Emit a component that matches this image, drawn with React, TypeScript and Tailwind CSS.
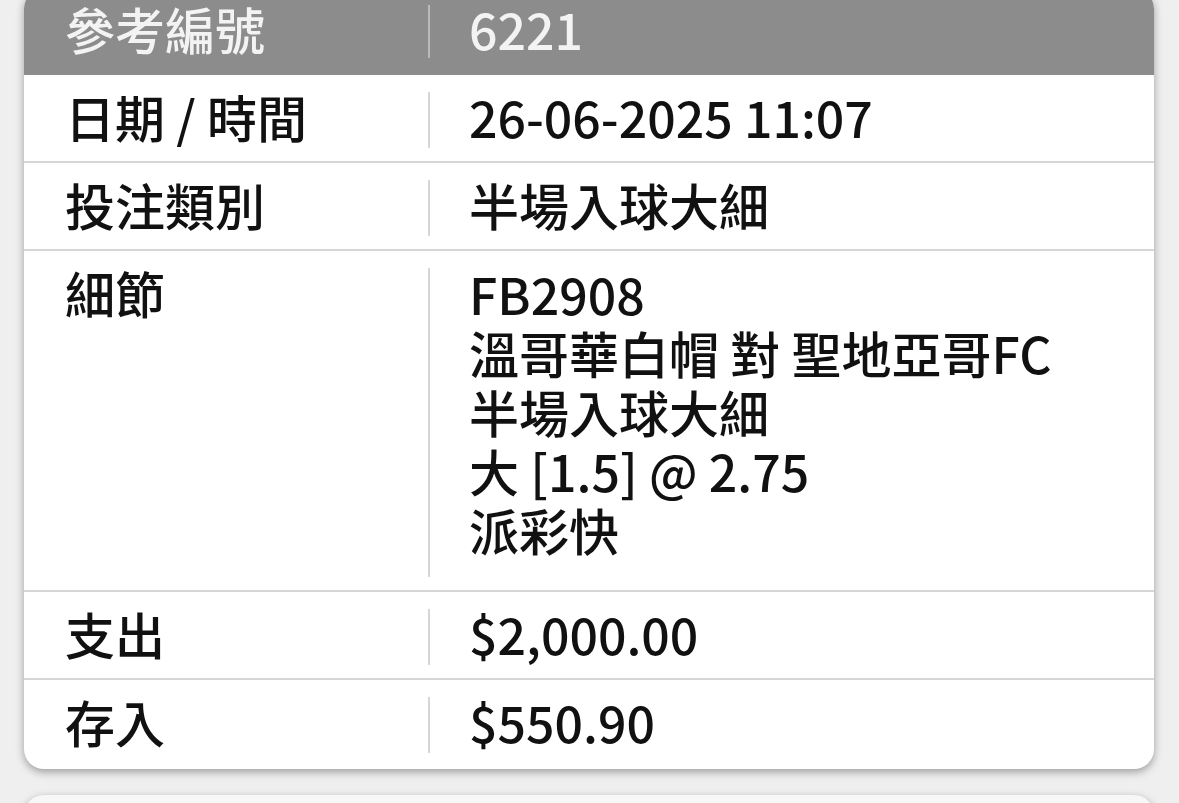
const rows = [
	{ label: "日期 / 時間", value: ["26-06-2025 11:07"] },
	{ label: "投注類別", value: ["半場入球大細"] },
	{
		label: "細節",
		value: ["FB2908", "溫哥華白帽 對 聖地亞哥FC", "半場入球大細", "大 [1.5] @ 2.75", "派彩快"],
	},
	{ label: "支出", value: ["$2,000.00"] },
	{ label: "存入", value: ["$550.90"] },
];

export default function App() {
	return (
		<div
			className="min-h-[803px] w-full overflow-hidden bg-[#efefef] text-[50px] text-[#111]"
			style={{ fontFamily: '"Noto Sans CJK TC", "Noto Sans", sans-serif' }}
		>
			<div className="mx-[24px] -mt-[11px] w-[1130px] rounded-[20px] bg-white shadow-[0_3px_8px_rgba(0,0,0,0.35)]">
				<div className="flex items-start rounded-t-[20px] bg-[#8c8c8c] pt-[16px] pb-[17px] text-[#f3f3f3]">
					<div className="-mt-[3px] w-[404px] pl-[41px] font-medium leading-[53px]">參考編號</div>
					<div className="border-l-2 border-[#b9b9b9] pl-[39px] font-medium">
						<div className="-mt-[3px] mb-[3px] leading-[53px]">6221</div>
					</div>
				</div>
				{rows.map((row, i) => {
					const multi = row.value.length > 1;
					const last = i === rows.length - 1;
					return (
						<div
							key={row.label}
							className={`flex items-start pt-[17px] ${last ? "pb-[16px]" : "pb-[13px]"} ${
								i > 0 ? "border-t-2 border-[#d6d6d6]" : ""
							}`}
						>
							<div className="-mt-[4px] w-[404px] pl-[41px] font-medium leading-[56px]">{row.label}</div>
							<div
								className={`border-l-2 border-[#d6d6d6] pl-[39px] font-medium ${
									multi ? "pb-[14px] leading-[59px]" : "leading-[56px]"
								}`}
							>
								<div className="-mt-[4px] mb-[4px]">
									{row.value.map((v) => (
										<div key={v}>{v}</div>
									))}
								</div>
							</div>
						</div>
					);
				})}
			</div>
			<div className="mx-[24px] mt-[26px] h-[60px] w-[1130px] rounded-[20px] bg-[#f7f7f7] shadow-[0_3px_8px_rgba(0,0,0,0.35)]" />
		</div>
	);
}
